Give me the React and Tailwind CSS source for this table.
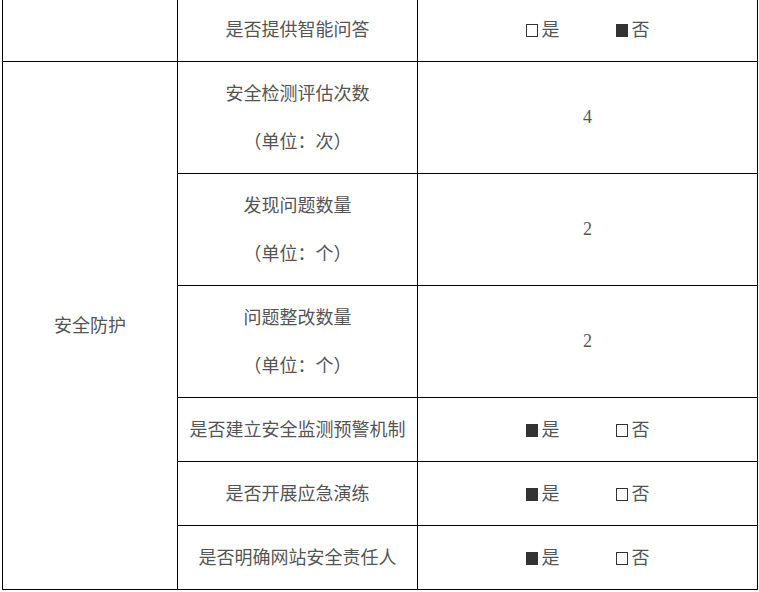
const cn = { fontFamily: '"Noto Sans CJK SC", "Noto Sans", sans-serif' }
const num = { fontFamily: '"Liberation Serif", "Noto Sans CJK SC", serif' }

function Box({ on }) {
  return on
    ? <span className="inline-block w-[12px] h-[13px] bg-[#333] align-[-1px] mr-[4px]" />
    : <span className="inline-block w-[12px] h-[13px] border border-[#333] align-[-1px] mr-[4px]" />
}

function YesNo({ yes }) {
  return (
    <div className="flex items-center justify-center gap-[56px]">
      <span><Box on={yes} />是</span>
      <span><Box on={!yes} />否</span>
    </div>
  )
}

const td = 'border border-black text-center align-middle p-0'
const tx = td + ' pb-[3px]'

export default function App() {
  return (
    <div className="w-[759px] h-[592px] bg-white overflow-hidden text-[#555] text-[18px]" style={cn}>
      <table className="table-fixed border-collapse ml-[2px] -mt-[3px]" style={{ width: 755 }}>
        <colgroup>
          <col style={{ width: 175 }} />
          <col style={{ width: 240 }} />
          <col style={{ width: 340 }} />
        </colgroup>
        <tbody>
          <tr className="h-[64px]">
            <td className={td}></td>
            <td className={tx}>是否提供智能问答</td>
            <td className={tx}><YesNo yes={false} /></td>
          </tr>
          <tr className="h-[112px]">
            <td className={tx} rowSpan={6}>安全防护</td>
            <td className={tx + ' leading-[48px]'}>安全检测评估次数<br />（单位：次）</td>
            <td className={td} style={num}>4</td>
          </tr>
          <tr className="h-[112px]">
            <td className={tx + ' leading-[48px]'}>发现问题数量<br />（单位：个）</td>
            <td className={td} style={num}>2</td>
          </tr>
          <tr className="h-[112px]">
            <td className={tx + ' leading-[48px]'}>问题整改数量<br />（单位：个）</td>
            <td className={td} style={num}>2</td>
          </tr>
          <tr className="h-[64px]">
            <td className={tx}>是否建立安全监测预警机制</td>
            <td className={tx}><YesNo yes={true} /></td>
          </tr>
          <tr className="h-[64px]">
            <td className={tx}>是否开展应急演练</td>
            <td className={tx}><YesNo yes={true} /></td>
          </tr>
          <tr className="h-[64px]">
            <td className={tx}>是否明确网站安全责任人</td>
            <td className={tx}><YesNo yes={true} /></td>
          </tr>
        </tbody>
      </table>
    </div>
  )
}
